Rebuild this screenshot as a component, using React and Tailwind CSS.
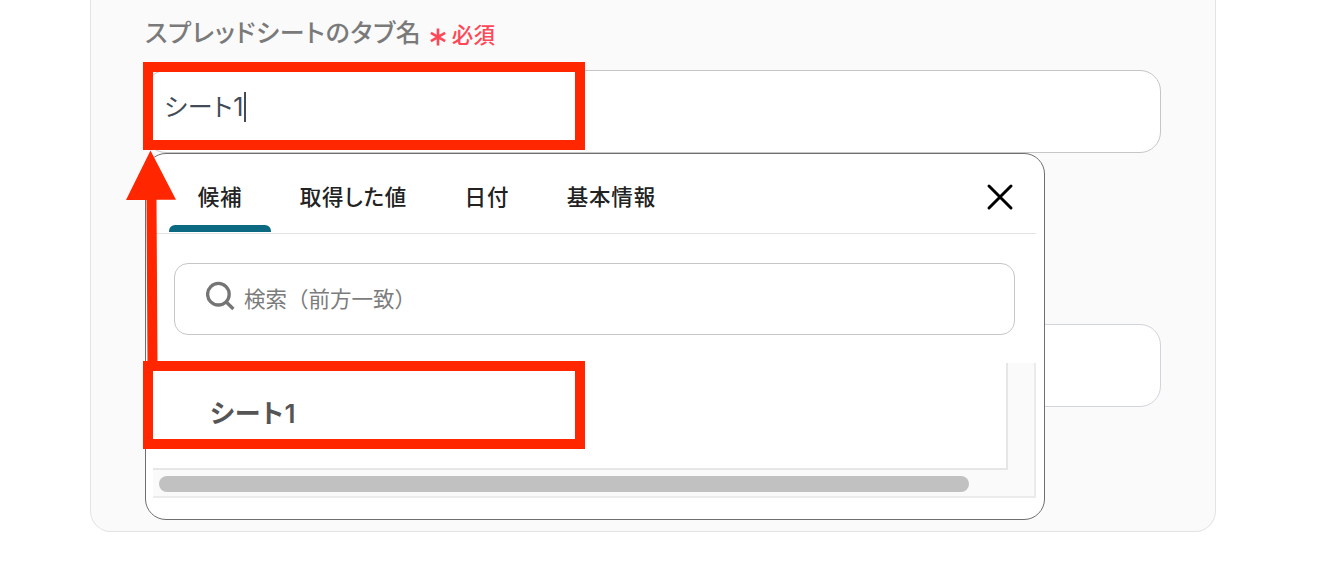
import { useState } from "react";

const tabs = ["候補", "取得した値", "日付", "基本情報"];

const SuggestPopover = ({ options }) => {
  const [activeTab, setActiveTab] = useState("候補");

  return (
    <div className="absolute left-0 top-full z-10 w-[900px] h-[367px] pl-[7px] pr-2 bg-white border border-[#6f6f6f] rounded-[21px]">
      {/* Tabs */}
      <div className="flex h-20 pl-4 border-b border-[#e3e3e3]">
        {tabs.map((tab) => (
          <button
            key={tab}
            onClick={() => setActiveTab(tab)}
            className="flex flex-col h-[78px] text-[21.5px] font-medium leading-8 tracking-[0.85px] text-[#222222] whitespace-nowrap [font-feature-settings:'palt']"
          >
            <span className="px-[28.7px] pt-[26px] grow">{tab}</span>
            {activeTab === tab && <span className="w-full h-[7px] rounded-t-[6px] bg-[#0b6a82]" />}
          </button>
        ))}
        <button className="ml-auto mr-[22px] mt-[29px] size-[28px]">
          <svg viewBox="0 0 28 28" className="size-[28px]" fill="none" stroke="#000" strokeWidth="3" strokeLinecap="round">
            <path d="M3 3l22 22M25 3L3 25" />
          </svg>
        </button>
      </div>

      {/* Search */}
      <div className="flex items-center mt-[29px] ml-[21px] w-[841px] h-[72px] pl-[31px] bg-white border border-[#c6c6c6] rounded-[14px]">
        <svg viewBox="0 0 30 30" className="size-[30px] -mt-1.5" fill="none" stroke="#757575" strokeWidth="3.3">
          <circle cx="12.4" cy="13.2" r="10.8" />
          <path d="M20 20.8L27.4 28" />
        </svg>
        <span className="ml-2 -mt-0.5 text-[21.5px] leading-8 text-[#7c7c7c]">検索（前方一致）</span>
      </div>

      {/* Option list with its scrollbars */}
      <div className="mt-7 w-[883px] h-[135px] bg-[#fafafa] border-r-2 border-b-2 border-[#ebebeb]">
        <div className="w-[855px] h-[107px] bg-white border-r-2 border-b-2 border-[#e6e6e6]">
          {options.map((option) => (
            <div
              key={option}
              className="pl-[57px] pt-[31px] font-['Inter','Noto_Sans_CJK_JP',sans-serif] text-[26px] font-semibold leading-10 tracking-[1.1px] text-[#555555] [font-feature-settings:'palt']"
            >
              {option}
            </div>
          ))}
        </div>
        <div className="mt-1.5 ml-1.5 w-[810px] h-4 rounded-full bg-[#c1c1c1]" />
      </div>
    </div>
  );
};

const Annotations = () => (
  <div className="pointer-events-none">
    <div className="absolute z-20 left-[143px] top-[62px] w-[442px] h-[88px] border-[10px] border-[#ff2600]" />
    <div className="absolute z-20 left-[143px] top-[361px] w-[442px] h-[88px] border-[10px] border-[#ff2600]" />
    <svg viewBox="0 0 50 212" className="absolute z-20 left-[126px] top-[150px] w-[50px] h-[212px]" fill="#ff2600">
      <path d="M24.5 0.5L50 49.7H30.5L31.5 212H21.5L20.5 49.9H0Z" />
    </svg>
  </div>
);

const App = () => {
  return (
    <div className="relative w-[1334px] h-[586px] overflow-hidden bg-white font-['Noto_Sans_CJK_JP',sans-serif]">
      <div className="ml-[90px] w-[1126px] h-[532px] px-[54px] bg-[#fafafa] border border-t-0 border-[#e3e3e3] rounded-b-[21px]">
        <div className="flex h-[70px] pt-[11px]">
          <span className="text-[25px] font-medium leading-10 tracking-[0.82px] text-[#7a7a7a] [font-feature-settings:'palt']">
            スプレッドシートのタブ名
          </span>
          <svg viewBox="0 0 16 18" className="ml-2 mt-[17px] w-4 h-[18px]" fill="none" stroke="#ff4757" strokeWidth="2.6">
            <path d="M8 0.5v17M0.9 4.9l14.2 8.2M15.1 4.9L0.9 13.1" />
          </svg>
          <span className="ml-1.5 mt-[5px] text-[21.5px] font-medium leading-9 tracking-[0.4px] text-[#ff4757]">必須</span>
        </div>

        <div className="relative">
          <div className="flex items-center h-[83px] pb-[9px] pl-[18px] bg-white border border-[#c6c6c6] rounded-[21px]">
            <span className="font-['Inter','Noto_Sans_CJK_JP',sans-serif] text-[25px] leading-10 tracking-[0.7px] text-[#434b57] [font-feature-settings:'palt']">
              シート1
            </span>
            <span className="w-0.5 h-[30px] bg-[#434b57]" />
          </div>
          <SuggestPopover options={["シート1"]} />
        </div>

        <div className="mt-[171px] h-[83px] bg-white border border-[#d1d5db] rounded-[21px]" />
      </div>
      <Annotations />
    </div>
  );
};

export default App;
